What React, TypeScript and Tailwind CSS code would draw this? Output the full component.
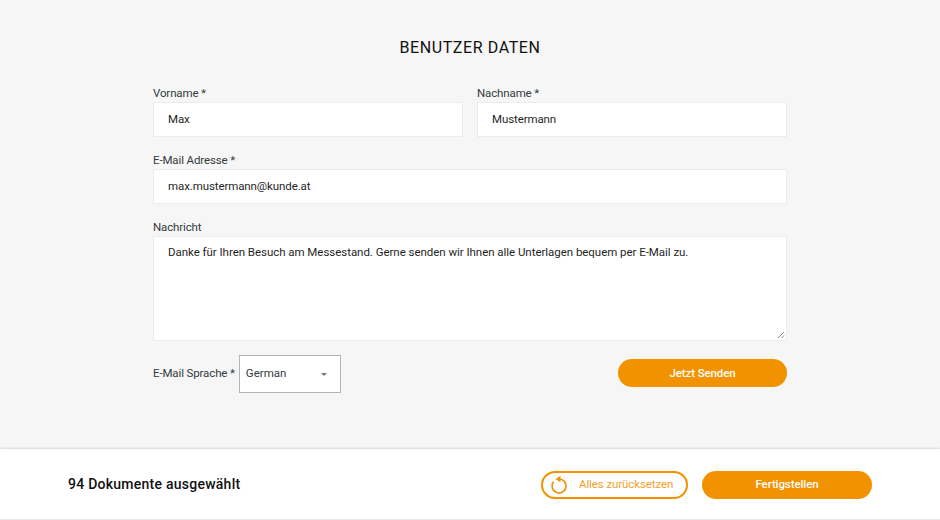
const fieldClass =
  'h-[35px] w-full border border-[#ececec] bg-white px-[14px] text-[11.5px] tracking-[-0.1px] text-[#1f1f1f]'
const labelClass = 'block h-[15px] text-[11.5px] leading-[16px] tracking-[-0.13px] text-[#333a40]'

export default function App() {
  return (
    <div className="flex h-[520px] w-[940px] flex-col overflow-hidden bg-[#f6f6f6] font-['Roboto',sans-serif]">
      <main className="h-[449px] px-[153px] pt-[38px]">
        <h1 className="text-center text-[16px] leading-[20px] tracking-[0.6px] text-[#111111]">
          BENUTZER DATEN
        </h1>

        <div className="mt-[27px] grid grid-cols-2 gap-x-[14px]">
          <div>
            <label className={labelClass}>Vorname *</label>
            <div className={`${fieldClass} mt-[2px] flex items-center`}>Max</div>
          </div>
          <div>
            <label className={labelClass}>Nachname *</label>
            <div className={`${fieldClass} mt-[2px] flex items-center`}>Mustermann</div>
          </div>
        </div>

        <div className="mt-[15px]">
          <label className={labelClass}>E-Mail Adresse *</label>
          <div className={`${fieldClass} mt-[2px] flex items-center`}>max.mustermann@kunde.at</div>
        </div>

        <div className="mt-[15px]">
          <label className={labelClass}>Nachricht</label>
          <div className="relative mt-[2px] h-[105px] w-full border border-[#ececec] bg-white px-[14px] pt-[7px] text-[11.5px] leading-[16px] tracking-[-0.04px] text-[#1f1f1f]">
            Danke für Ihren Besuch am Messestand. Gerne senden wir Ihnen alle Unterlagen bequem per E-Mail zu.
            <svg className="absolute bottom-[1px] right-[1px]" width="8" height="8" viewBox="0 0 8 8">
              <path d="M1 7 7 1M4.5 7 7 4.5" stroke="#8a8a8a" strokeWidth="1" />
            </svg>
          </div>
        </div>

        <div className="mt-[14px] flex items-center justify-between">
          <div className="flex items-center gap-[4px]">
            <span className="text-[11.5px] tracking-[-0.13px] text-[#333a40]">E-Mail Sprache *</span>
            <div className="flex h-[38px] w-[102px] items-center justify-between border border-[#b4b4b4] bg-white pl-[6px] pr-[13px] text-[11.5px] text-[#333a40]">
              German
              <span className="h-0 w-0 border-x-[3px] border-t-[3px] border-x-transparent border-t-[#777777]" />
            </div>
          </div>
          <button className="mt-[-2px] h-[28px] w-[169px] rounded-full bg-[#f39200] pt-[1px] text-[11.5px] font-medium tracking-[-0.1px] text-white">
            Jetzt Senden
          </button>
        </div>
      </main>

      <footer className="flex h-[71px] items-center justify-between border-b border-b-[#e8e8e8] bg-white pl-[68px] pr-[68px] pt-[1px] shadow-[0_-1px_2px_rgba(0,0,0,0.12)]">
        <span className="text-[14px] font-medium tracking-[0.25px] text-[#111111]">94 Dokumente ausgewählt</span>
        <div className="flex items-center gap-[14px]">
          <button className="flex h-[28px] w-[147px] items-center whitespace-nowrap rounded-full border-2 border-[#f39200] bg-white pl-[7px] text-[11.5px] tracking-[-0.1px] text-[#f4a02c]">
            <svg width="18" height="20" viewBox="0 0 18 20" fill="none" stroke="#f39200" strokeWidth="1.7">
              <path d="M9 4A7 7 0 1 1 3.6 6.6" />
              <path d="M10.5 0.8 5.4 4 10.5 7.2Z" fill="#f39200" stroke="none" />
            </svg>
            <span className="ml-[11px]">Alles zurücksetzen</span>
          </button>
          <button className="h-[28px] w-[170px] rounded-full bg-[#f39200] text-[11.5px] font-medium tracking-[-0.1px] text-white">
            Fertigstellen
          </button>
        </div>
      </footer>
    </div>
  )
}
